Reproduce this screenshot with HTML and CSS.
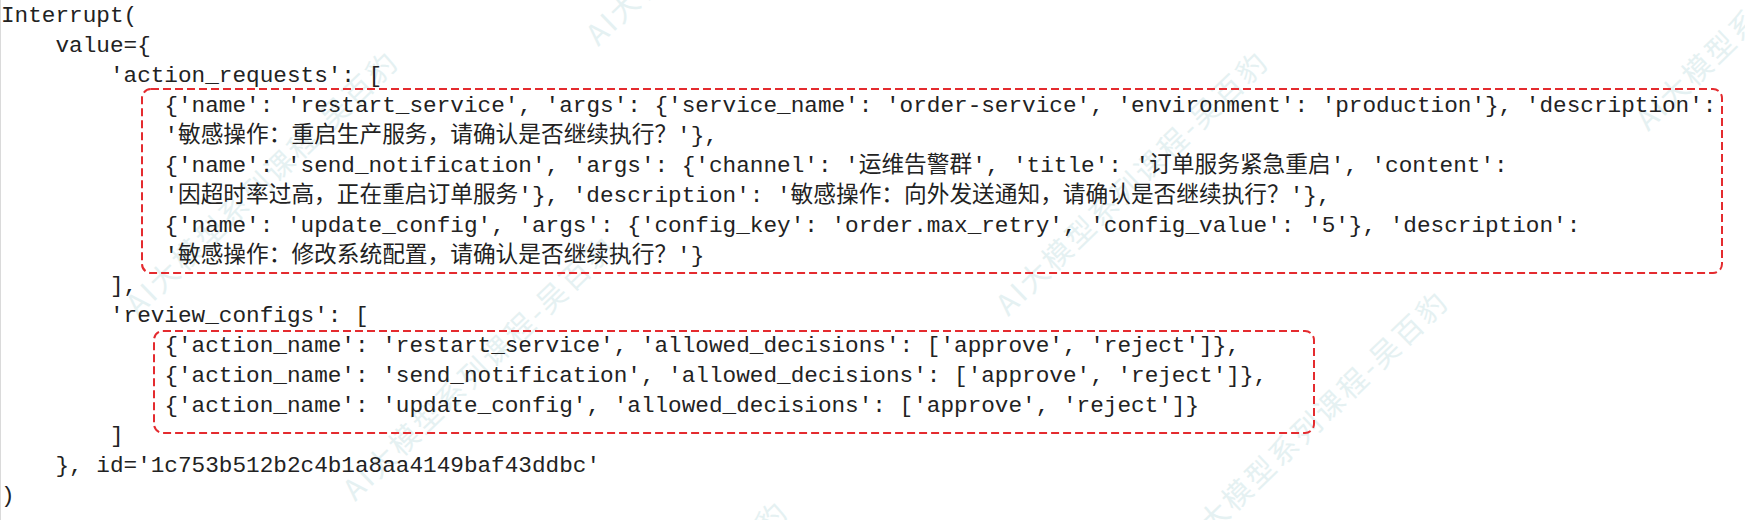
FILE: index.html
```html
<!DOCTYPE html>
<html lang="zh-CN">
<head>
<meta charset="utf-8">
<title>Interrupt</title>
<link rel="stylesheet" href="styles.css">
</head>
<body>
<div class="page">
  <div class="ln">Interrupt(</div>
  <div class="ln i1">value={</div>
  <div class="ln i2">'action_requests': [</div>
  <div class="box box-req">
    <svg class="dash" width="1582" height="186" aria-hidden="true"><rect x="1" y="1" width="1580" height="184" rx="9" ry="9"/></svg>
    <div class="ln">{'name': 'restart_service', 'args': {'service_name': 'order-service', 'environment': 'production'}, 'description':</div>
    <div class="ln">'敏感操作：重启生产服务，请确认是否继续执行？'},</div>
    <div class="ln">{'name': 'send_notification', 'args': {'channel': '运维告警群', 'title': '订单服务紧急重启', 'content':</div>
    <div class="ln">'因超时率过高，正在重启订单服务'}, 'description': '敏感操作：向外发送通知，请确认是否继续执行？'},</div>
    <div class="ln">{'name': 'update_config', 'args': {'config_key': 'order.max_retry', 'config_value': '5'}, 'description':</div>
    <div class="ln">'敏感操作：修改系统配置，请确认是否继续执行？'}</div>
  </div>
  <div class="ln i2">],</div>
  <div class="ln i2">'review_configs': [</div>
  <div class="box box-rev">
    <svg class="dash" width="1162" height="104" aria-hidden="true"><rect x="1" y="1" width="1160" height="102" rx="9" ry="9"/></svg>
    <div class="ln">{'action_name': 'restart_service', 'allowed_decisions': ['approve', 'reject']},</div>
    <div class="ln">{'action_name': 'send_notification', 'allowed_decisions': ['approve', 'reject']},</div>
    <div class="ln">{'action_name': 'update_config', 'allowed_decisions': ['approve', 'reject']}</div>
  </div>
  <div class="ln i2">]</div>
  <div class="ln i1">}, id='1c753b512b2c4b1a8aa4149baf43ddbc'</div>
  <div class="ln">)</div>

  <span class="wm wm1">AI大模型系列课程-吴百豹</span>
  <span class="wm wm2">AI大模型系列课程-吴百豹</span>
  <span class="wm wm3">AI大模型系列课程-吴百豹</span>
  <span class="wm wm4">AI大模型系列课程-吴百豹</span>
  <span class="wm wm5">AI大模型系列课程-吴百豹</span>
  <span class="wm wm6">AI大模型系列课程-吴百豹</span>
  <span class="wm wm7">AI大模型系列课程-吴百豹</span>
</div>
</body>
</html>
```

FILE: styles.css
```css
html, body {
  margin: 0;
  padding: 0;
  background: #ffffff;
}

.page {
  position: relative;
  width: 1744px;
  height: 519px;
  overflow: hidden;
  border-left: 1px solid #dadada;
  padding-top: 1px;
  font-family: "Liberation Mono", "Noto Sans CJK SC", monospace;
  font-size: 22.7px;
  line-height: 30px;
  color: #222222;
}

.ln {
  position: relative;
  z-index: 1;
  white-space: pre;
  height: 30px;
}

.i1 { padding-left: 4ch; }
.i2 { padding-left: 8ch; }

.box {
  position: relative;
  box-sizing: border-box;
}

.box-req {
  width: 1582px;
  margin: -3px 0 -3px 140px;
  padding: 3px 0 3px calc(12ch - 140px);
}

.box-rev {
  width: 1162px;
  margin: -1px 0 -13px 152px;
  padding: 1px 0 13px calc(12ch - 152px);
}

.dash {
  position: absolute;
  left: 0;
  top: 0;
  z-index: 2;
  overflow: visible;
}

.dash rect {
  fill: none;
  stroke: #e42b2f;
  stroke-width: 2;
  stroke-dasharray: 8 4;
}

.wm {
  position: absolute;
  z-index: 0;
  font-family: "Noto Sans CJK SC", "Noto Sans", sans-serif;
  font-size: 29px;
  line-height: 34px;
  letter-spacing: 3px;
  white-space: nowrap;
  color: #e5f1f2;
  transform: rotate(-44deg);
  transform-origin: 0 100%;
}

.wm1 { left: 140px; top: 286px; }
.wm2 { left: 1010px; top: 286px; }
.wm3 { left: 1190px; top: 526px; }
.wm4 { left: 1650px; top: 101px; }
.wm5 { left: 600px; top: 16px; }
.wm6 { left: 357px; top: 471px; }
.wm7 { left: 530px; top: 736px; }
```
